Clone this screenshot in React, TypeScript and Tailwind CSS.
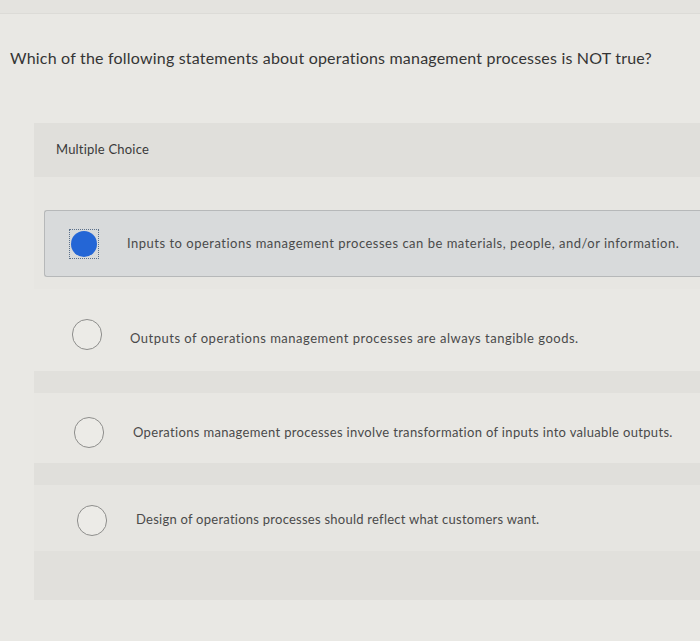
import React from "react";

const options = [
  "Inputs to operations management processes can be materials, people, and/or information.",
  "Outputs of operations management processes are always tangible goods.",
  "Operations management processes involve transformation of inputs into valuable outputs.",
  "Design of operations processes should reflect what customers want.",
];

function Radio({ checked }: { checked: boolean }) {
  if (checked) {
    return (
      <div className="w-[30px] h-[30px] border border-dotted border-[#5a6f8a] flex items-center justify-center shrink-0">
        <div className="w-[26px] h-[26px] rounded-full bg-[#2466d6]" />
      </div>
    );
  }
  return <div className="w-[30px] h-[31px] rounded-full border-[1.5px] border-[#8e8e8c] bg-[#ecebe7] shrink-0" />;
}

export default function App() {
  return (
    <div
      className="w-[700px] h-[641px] bg-[#e9e8e4] overflow-hidden flex flex-col text-[#3e3e3e]"
      style={{ fontFamily: "Lato, 'Open Sans', Arial, sans-serif" }}
    >
      <div className="h-[14px] bg-[#e4e3df] border-b border-[#dcdbd7]" />
      <div className="pl-[10px] pt-[32px] h-[109px] text-[16px] text-[#353535] tracking-[0.2px]">
        Which of the following statements about operations management processes is NOT true?
      </div>

      <div className="ml-[34px] flex flex-col bg-[#e7e6e2]">
        <div className="h-[54px] bg-[#e0dfdb] flex items-center pl-[22px] text-[13px] text-[#3a3a3a] tracking-[0.2px]">
          Multiple Choice
        </div>

        <div className="pt-[33px] pl-[10px]">
          <div className="h-[67px] bg-[#d8dadb] border border-[#b6b8b9] rounded-l-[3px] border-r-0 flex items-center pl-[24px] gap-[28px]">
            <Radio checked />
            <span className="text-[13px] text-[#4a4a4a] tracking-[0.5px]">{options[0]}</span>
          </div>
        </div>

        <div className="h-[12px]" />
        <div className="h-[82px] bg-[#e9e8e4] flex items-center pt-[8px] pl-[38px] gap-[28px]">
          <Radio checked={false} />
          <span className="text-[13px] text-[#4a4a4a] tracking-[0.5px] pt-[10px]">{options[1]}</span>
        </div>
        <div className="h-[22px] bg-[#e1e0dc]" />
        <div className="h-[70px] bg-[#e8e7e3] flex items-center pt-[8px] pl-[40px] gap-[29px]">
          <Radio checked={false} />
          <span className="text-[13px] text-[#4a4a4a] tracking-[0.33px] pt-[2px]">{options[2]}</span>
        </div>
        <div className="h-[22px] bg-[#e0dfdb]" />
        <div className="h-[66px] bg-[#e6e5e1] flex items-center pt-[4px] pl-[43px] gap-[29px]">
          <Radio checked={false} />
          <span className="text-[13px] text-[#4a4a4a] tracking-[0.25px]">{options[3]}</span>
        </div>
        <div className="h-[49px] bg-[#e1e0dc]" />
      </div>
    </div>
  );
}
